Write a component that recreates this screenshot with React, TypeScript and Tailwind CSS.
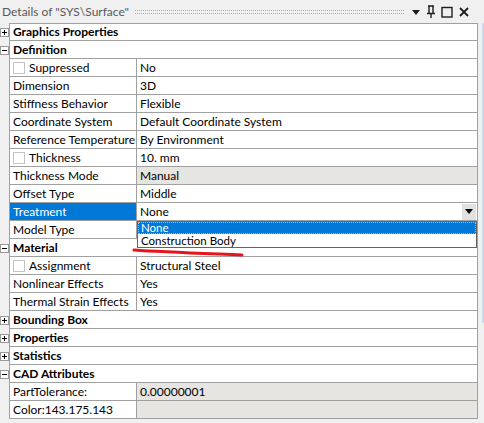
import React from "react";

type Row =
  | { kind: "cat"; label: string; open: boolean }
  | {
      kind: "prop";
      label: string;
      value: string;
      check?: boolean;
      grayValue?: boolean;
      selected?: boolean;
      combo?: boolean;
    };

const rows: Row[] = [
  { kind: "cat", label: "Graphics Properties", open: false },
  { kind: "cat", label: "Definition", open: true },
  { kind: "prop", label: "Suppressed", value: "No", check: true },
  { kind: "prop", label: "Dimension", value: "3D" },
  { kind: "prop", label: "Stiffness Behavior", value: "Flexible" },
  { kind: "prop", label: "Coordinate System", value: "Default Coordinate System" },
  { kind: "prop", label: "Reference Temperature", value: "By Environment" },
  { kind: "prop", label: "Thickness", value: "10. mm", check: true },
  { kind: "prop", label: "Thickness Mode", value: "Manual", grayValue: true },
  { kind: "prop", label: "Offset Type", value: "Middle" },
  { kind: "prop", label: "Treatment", value: "None", selected: true, combo: true },
  { kind: "prop", label: "Model Type", value: "" },
  { kind: "cat", label: "Material", open: true },
  { kind: "prop", label: "Assignment", value: "Structural Steel", check: true },
  { kind: "prop", label: "Nonlinear Effects", value: "Yes" },
  { kind: "prop", label: "Thermal Strain Effects", value: "Yes" },
  { kind: "cat", label: "Bounding Box", open: false },
  { kind: "cat", label: "Properties", open: false },
  { kind: "cat", label: "Statistics", open: false },
  { kind: "cat", label: "CAD Attributes", open: true },
  { kind: "prop", label: "PartTolerance:", value: "0.00000001", grayValue: true },
  { kind: "prop", label: "Color:143.175.143", value: "", grayValue: true },
];

function Expander({ open }: { open: boolean }) {
  return (
    <div className="relative h-[9px] w-[9px] border border-[#9a9a9a] bg-white">
      <div className="absolute left-[1px] top-[3px] h-px w-[5px] bg-black" />
      {!open && <div className="absolute left-[3px] top-[1px] h-[5px] w-px bg-black" />}
    </div>
  );
}

function Check() {
  return <div className="h-[12px] w-[12px] shrink-0 border border-[#c4c4c4] bg-white" />;
}

export default function App() {
  return (
    <div className="relative h-[423px] w-[484px] overflow-hidden bg-[#f0f0f0] font-['Lato',sans-serif] text-[12px] text-black">
      {/* title bar */}
      <div className="flex h-[23px] items-center pl-[2px] pr-[14px]">
        <span className="whitespace-nowrap text-[12px] text-[#5a5a5a]">Details of "SYS\Surface"</span>
        <div className="ml-[6px] mr-[5px] h-[4px] flex-1 border-y border-dotted border-[#a8a8a8]" />
        <svg width="10" height="10" viewBox="0 0 10 10" className="ml-[2px]">
          <path d="M1 3 L9 3 L5 8 Z" fill="#1e1e1e" />
        </svg>
        <svg width="12" height="14" viewBox="0 0 12 14" className="ml-[4px]">
          <path d="M3 1 H9 M4 1 V8 M8 1 V8 M2 8.5 H10 M6 9 V13" stroke="#1e1e1e" strokeWidth="1.4" fill="none" />
        </svg>
        <svg width="12" height="12" viewBox="0 0 12 12" className="ml-[4px]">
          <rect x="1" y="1.5" width="10" height="9.5" stroke="#1e1e1e" strokeWidth="1.4" fill="none" />
        </svg>
        <svg width="12" height="12" viewBox="0 0 12 12" className="ml-[5px]">
          <path d="M2 2 L10 10 M10 2 L2 10" stroke="#1e1e1e" strokeWidth="1.8" />
        </svg>
      </div>

      <div className="flex">
        <div className="w-[478px]">
          {rows.map((r, i) => (
            <div key={i} className="flex h-[18px]">
              <div className="flex w-[9px] items-center justify-start">
                {r.kind === "cat" && <Expander open={r.open} />}
              </div>
              <div
                className={`flex w-[469px] border-x border-b border-[#a0a0a0] bg-white ${
                  i === 0 ? "border-t" : ""
                }`}
              >
                {r.kind === "cat" ? (
                  <div className="flex items-center whitespace-nowrap pl-[3px] font-bold">{r.label}</div>
                ) : (
                  <>
                    <div
                      className={`flex w-[127px] items-center gap-[4px] overflow-hidden whitespace-nowrap border-r border-[#a0a0a0] pl-[3px] ${
                        r.selected ? "bg-[#0078d7] text-white" : ""
                      }`}
                    >
                      {r.check && <Check />}
                      <span>{r.label}</span>
                    </div>
                    <div
                      className={`flex flex-1 items-center whitespace-nowrap pl-[3px] ${
                        r.grayValue ? "bg-[#e6e5e2]" : ""
                      }`}
                    >
                      <span className="flex-1">{r.value}</span>
                      {r.combo && (
                        <div className="mr-[1px] flex h-[16px] w-[14px] items-center justify-center bg-[#e1e1e1]">
                          <svg width="8" height="5" viewBox="0 0 8 5">
                            <path d="M0 0 H8 L4 5 Z" fill="#000" />
                          </svg>
                        </div>
                      )}
                    </div>
                  </>
                )}
              </div>
            </div>
          ))}
        </div>
        <div className="flex flex-1 flex-col">
          <div className="ml-auto h-[300px] w-[2px] bg-[#cdd9ee]" />
        </div>
      </div>

      {/* dropdown list */}
      <div className="absolute left-[137px] top-[221px] w-[340px] border border-[#646464] bg-white text-[11.5px]">
        <div className="flex h-[12px] items-center overflow-hidden border border-dotted border-[#f4a460] bg-[#0078d7] pl-[2px] text-white">
          <span className="leading-[10px]">None</span>
        </div>
        <div className="flex h-[13px] items-center overflow-hidden whitespace-nowrap pl-[3px]">
          <span className="leading-[12px]">Construction Body</span>
        </div>
      </div>

      {/* red annotation */}
      <svg className="absolute left-[132px] top-[247px]" width="114" height="12" viewBox="0 0 114 12">
        <path d="M2 3 C30 5, 60 6, 110 8" stroke="#e8141b" strokeWidth="3" fill="none" strokeLinecap="round" />
      </svg>
    </div>
  );
}
